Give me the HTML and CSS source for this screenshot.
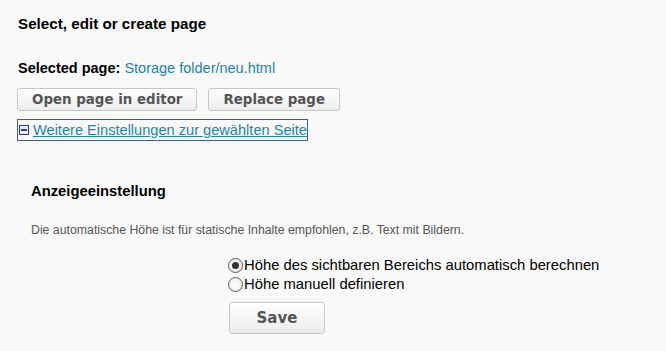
FILE: index.html
```html
<!DOCTYPE html>
<html lang="en">
<head>
  <meta charset="UTF-8">
  <title>Select page</title>
  <link rel="stylesheet" href="styles.css">
</head>
<body>
  <div class="page">
    <h2 class="title">Select, edit or create page</h2>

    <p class="selected"><b>Selected page:</b> <a href="#" class="plain-link">Storage folder/neu.html</a></p>

    <div class="btn-row">
      <button class="btn">Open page in editor</button>
      <button class="btn">Replace page</button>
    </div>

    <div class="toggle-row">
      <span class="toggle-icon"></span>
      <a href="#" class="toggle-link">Weitere Einstellungen zur gewählten Seite</a>
    </div>

    <div class="settings">
      <h3 class="settings-title">Anzeigeeinstellung</h3>
      <p class="hint">Die automatische Höhe ist für statische Inhalte empfohlen, z.B. Text mit Bildern.</p>

      <div class="options">
        <label class="option"><input type="radio" name="height" checked>Höhe des sichtbaren Bereichs automatisch berechnen</label>
        <label class="option"><input type="radio" name="height">Höhe manuell definieren</label>
        <button class="btn btn-save">Save</button>
      </div>
    </div>
  </div>
</body>
</html>
```

FILE: styles.css
```css
*{
  margin: 0;
  padding: 0;
  box-sizing: border-box;
}
body{
  font-family: "Liberation Sans", Arial, sans-serif;
  background-color: #f9f9f9;
  color: #000;
}

.page{
  padding: 15px 18px;
}

.title{
  font-size: 15.2px;
  font-weight: bold;
  line-height: 18px;
}

.selected{
  font-size: 14.5px;
  line-height: 17px;
  margin-top: 27px;
}

.plain-link{
  color: #1a87a8;
  text-decoration: none;
}

.btn-row{
  display: flex;
  column-gap: 11px;
  margin-top: 11px;
  margin-left: -1px;
}

.btn{
  font-family: "DejaVu Sans", Verdana, sans-serif;
  font-weight: bold;
  font-size: 13.4px;
  color: #555;
  height: 23px;
  padding: 0 14px;
  border: 1px solid #c8c8c8;
  border-radius: 3px;
  background: linear-gradient(#fefefe, #ececec);
}

.toggle-row{
  display: inline-flex;
  align-items: center;
  column-gap: 4px;
  margin-top: 8px;
  margin-left: -1px;
  padding: 2px 0 2px 1px;
  border: 1px solid #3b5d8f;
}

.toggle-icon{
  width: 10px;
  height: 10px;
  border: 1px solid #203c8a;
  background-color: #eef1f8;
  position: relative;
}
.toggle-icon::after{
  content: "";
  position: absolute;
  left: 1px;
  right: 1px;
  top: 3px;
  height: 2px;
  background-color: #203c8a;
}

.toggle-link{
  font-size: 14.6px;
  line-height: 16px;
  color: #1a87a8;
}

.settings{
  padding-left: 13px;
  margin-top: 42px;
}

.settings-title{
  font-size: 14.8px;
  font-weight: bold;
  line-height: 17px;
}

.hint{
  font-size: 12.3px;
  color: #555;
  margin-top: 23px;
}

.options{
  display: flex;
  flex-direction: column;
  align-items: flex-start;
  margin-left: 197px;
  margin-top: 19px;
}

.option{
  display: flex;
  align-items: center;
  font-size: 14.8px;
  line-height: 19px;
}

.option input{
  appearance: none;
  width: 15px;
  height: 15px;
  border: 1.5px solid #5a5a5a;
  border-radius: 50%;
  background: radial-gradient(#fff, #e6e6e6);
  margin-right: 1px;
  position: relative;
}
.option input:checked::after{
  content: "";
  position: absolute;
  left: 2.5px;
  top: 2.5px;
  width: 7px;
  height: 7px;
  border-radius: 50%;
  background-color: #333;
}

.btn-save{
  width: 96px;
  height: 32px;
  font-size: 15px;
  margin-top: 8px;
  margin-left: 1px;
}
```
